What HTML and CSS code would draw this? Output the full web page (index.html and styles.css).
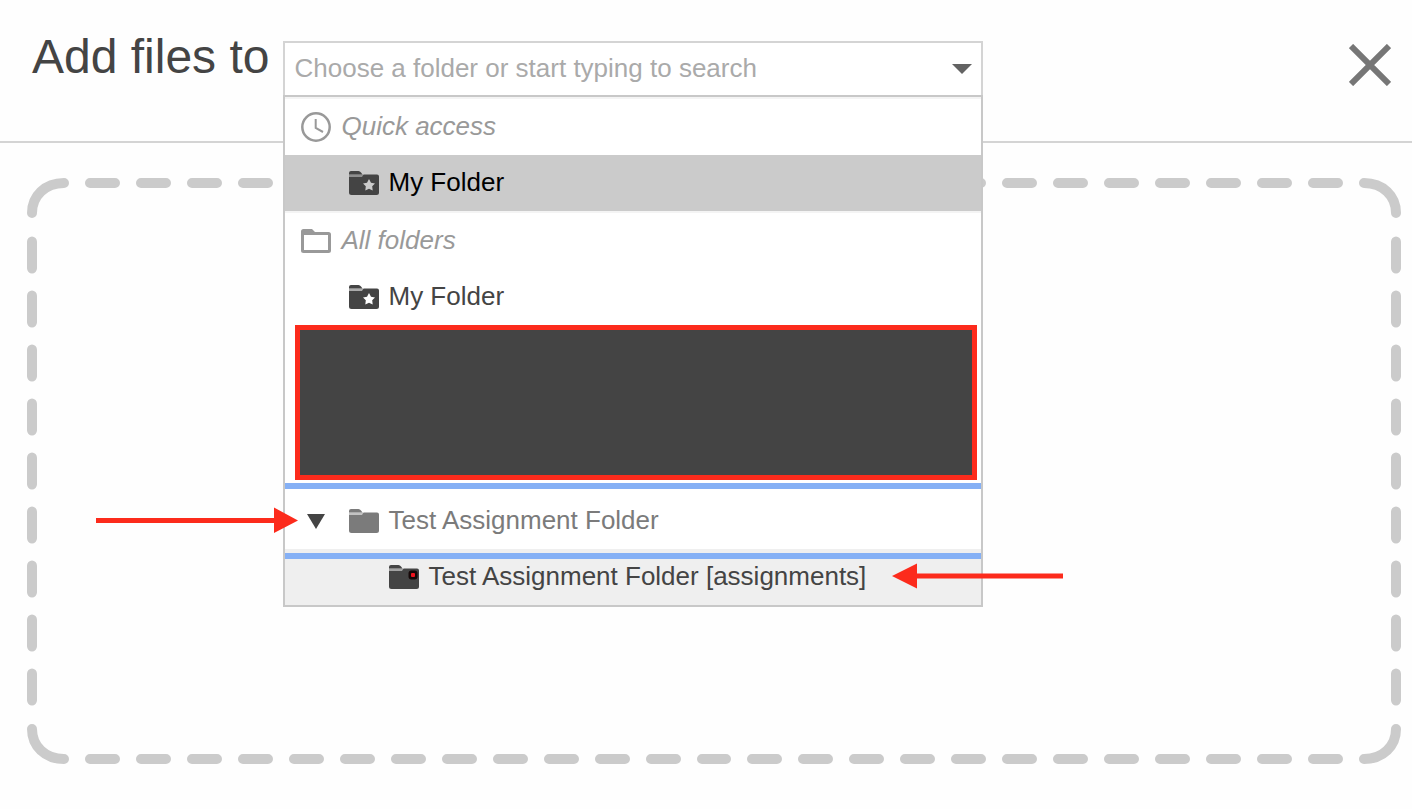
FILE: index.html
```html
<!DOCTYPE html>
<html lang="en">
<head>
  <meta charset="UTF-8">
  <title>Add files</title>
  <link rel="stylesheet" href="styles.css">
</head>
<body>
  <svg class="sprite" aria-hidden="true">
    <symbol id="folder" viewBox="0 0 32 26">
      <path d="M1 4.500V3Q1 1 3 1H10.500Q12 1 13 2.500L14.500 4.500Z"/>
      <path d="M1 4.500H15V7H1Z" opacity="0.45"/>
      <path d="M1 7H14L15.500 4.500H29Q31 4.500 31 6.500V22.500Q31 25 28.500 25H3.500Q1 25 1 22.500Z"/>
    </symbol>
    <symbol id="star" viewBox="0 0 12 12">
      <path d="M6 0L8 3.700L12 4.400L9.200 7.300L9.700 11.500L6 9.700L2.300 11.500L2.800 7.300L0 4.400L4 3.700Z"/>
    </symbol>
  </svg>

  <header class="header">
    <label class="title" for="folder-search">Add files to</label>
    <div class="combo">
      <div class="combo-box">
        <input class="combo-input" type="text" id="folder-search" placeholder="Choose a folder or start typing to search">
        <button class="combo-toggle" type="button" aria-label="Show folders">
          <svg width="20" height="10" viewBox="0 0 20 10"><path d="M0 0H20L10 10Z" fill="#636363"/></svg>
        </button>
      </div>

      <ul class="list">
        <li class="row group">
          <svg class="icon-group" viewBox="0 0 30 30" fill="none" stroke="#999" stroke-width="2.500">
            <circle cx="15" cy="15" r="13.700"/>
            <path d="M14.700 7V16L22 20" stroke-width="2"/>
          </svg>
          Quick access
        </li>
        <li class="row child selected">
          <svg class="icon-folder" viewBox="0 0 32 26">
            <use href="#folder"/>
            <use href="#star" x="15" y="9" width="12" height="12" fill="#ccc"/>
          </svg>
          My Folder
        </li>
        <li class="row group">
          <svg class="icon-group" viewBox="0 0 30 30" fill="#999">
            <path fill-rule="evenodd" d="M0 5.500Q0 3 2.500 3H11L14 6H27.500Q30 6 30 8.500V24.500Q30 27 27.500 27H2.500Q0 27 0 24.500ZM3 9V24H27V9Z"/>
          </svg>
          All folders
        </li>
        <li class="row child">
          <svg class="icon-folder" viewBox="0 0 32 26">
            <use href="#folder"/>
            <use href="#star" x="15" y="9" width="12" height="12" fill="#fff"/>
          </svg>
          My Folder
        </li>
        <li class="hidden-rows"><div class="cover"></div></li>
        <li class="row child parent marked-above">
          <button class="expander" type="button" aria-label="Collapse">
            <svg width="20" height="16" viewBox="0 0 20 16"><path d="M1 1H19L10 16Z" fill="#444"/></svg>
          </button>
          <svg class="icon-folder" viewBox="0 0 32 26"><use href="#folder"/></svg>
          Test Assignment Folder
          <svg class="arrow arrow-left" width="202" height="26" viewBox="0 0 202 26" fill="#fc2b1c">
            <path d="M0 11H178V0.500L202 13.500L178 26V16H0Z"/>
          </svg>
        </li>
        <li class="row nested marked-inside">
          <svg class="icon-folder" viewBox="0 0 32 26">
            <use href="#folder"/>
            <rect x="20.500" y="6.500" width="9" height="9" rx="3" fill="#160808"/>
            <rect x="23" y="9" width="4" height="4" rx="1" fill="#f0141e"/>
          </svg>
          Test Assignment Folder [assignments]
          <svg class="arrow arrow-right" width="171" height="26" viewBox="0 0 171 26" fill="#fc2b1c">
            <path d="M171 10.500H25V0.500L0 13L25 25.500V15.500H171Z"/>
          </svg>
        </li>
      </ul>
    </div>
    <button class="close" type="button" aria-label="Close">
      <svg width="42" height="42" viewBox="0 0 42 42"><path d="M2 2L40 40M40 2L2 40" stroke="#767676" stroke-width="6"/></svg>
    </button>
  </header>

  <main class="drop-area"></main>
</body>
</html>
```

FILE: styles.css
```css
* {
  box-sizing: border-box;
}

body {
  margin: 0;
  min-height: 100vh;
  display: flex;
  flex-direction: column;
  background: #fefefe;
  color: #444;
  font-family: "Liberation Sans", Arial, sans-serif;
  font-size: 26px;
}

button {
  padding: 0;
  border: none;
  background: none;
  cursor: pointer;
}

svg {
  display: block;
  flex: none;
}

.sprite {
  position: absolute;
  width: 0;
  height: 0;
}

.header {
  display: flex;
  align-items: flex-start;
  padding: 41px 21px 44px 32px;
  border-bottom: 2px solid #d4d4d4;
}

.title {
  flex: none;
  margin-top: -12px;
  margin-right: 14px;
  font-size: 48px;
  line-height: 56px;
}

.combo {
  position: relative;
  z-index: 1;
  flex: 0 1 700px;
}

.combo-box {
  display: flex;
  height: 56px;
  border: 2px solid #d4d4d4;
  background: #fff;
}

.combo-input {
  flex: 1;
  min-width: 0;
  padding: 0 0 2px 9px;
  border: none;
  outline: none;
  background: none;
  color: #444;
  font: inherit;
}

.combo-input::placeholder {
  color: #aaa;
  opacity: 1;
}

.combo-toggle {
  padding: 0 9px;
}

.close {
  margin-top: 3px;
  margin-left: auto;
}

/* dropdown list */
.list {
  position: absolute;
  top: 54px;
  left: 0;
  right: 0;
  margin: 0;
  padding: 0;
  border: 2px solid #c8c8c8;
  background: #fff;
  list-style: none;
}

.row {
  position: relative;
  display: flex;
  align-items: center;
  gap: 8px;
  height: 56px;
  padding-bottom: 2px;
  white-space: nowrap;
  fill: #444;
}

.group {
  gap: 10px;
  height: 58px;
  padding-left: 16px;
  border-top: 2px solid #f4f4f4;
  color: #999;
  font-style: italic;
}

.child {
  padding-left: 63px;
}

.nested {
  padding-left: 103px;
  background: #efefef;
}

.selected {
  background: #cbcbcb;
  color: #000;
}

.parent {
  color: #7b7b7b;
  fill: #7b7b7b;
}

.icon-group {
  width: 30px;
  height: 30px;
  margin-top: 2px;
}

.icon-folder {
  width: 32px;
  height: 26px;
  margin-top: 2px;
}

.expander {
  position: absolute;
  top: 20px;
  left: 21px;
}

.hidden-rows {
  height: 168px;
  padding: 0 4px 13px 10px;
}

.cover {
  height: 100%;
  border: 5px solid #fc2b1c;
  background: #444;
}

.marked-above::before,
.marked-inside::before {
  content: "";
  position: absolute;
  left: 0;
  right: 0;
  height: 6px;
  background: #85b0f5;
}

.marked-above::before {
  top: -10px;
}

.marked-inside::before {
  top: 4px;
}

.arrow {
  position: absolute;
  top: 14px;
}

.arrow-left {
  left: -189px;
}

.arrow-right {
  left: 607px;
}

.drop-area {
  flex: 1;
  margin: 35px 11px 45px 27px;
  border: 50px solid transparent;
  border-image: url("data:image/svg+xml,%3Csvg xmlns='http://www.w3.org/2000/svg' width='151' height='152' fill='none' stroke='%23cbcbcb' stroke-width='10' stroke-linecap='round'%3E%3Cpath d='M5 35C5 18 18 5 37 5M63 5H88M114 5C133 5 146 18 146 35M146 63V89M146 117C146 134 133 147 114 147M88 147H63M37 147C18 147 5 134 5 117M5 89V63'/%3E%3C/svg%3E") 50 / 50px round;
}
```
